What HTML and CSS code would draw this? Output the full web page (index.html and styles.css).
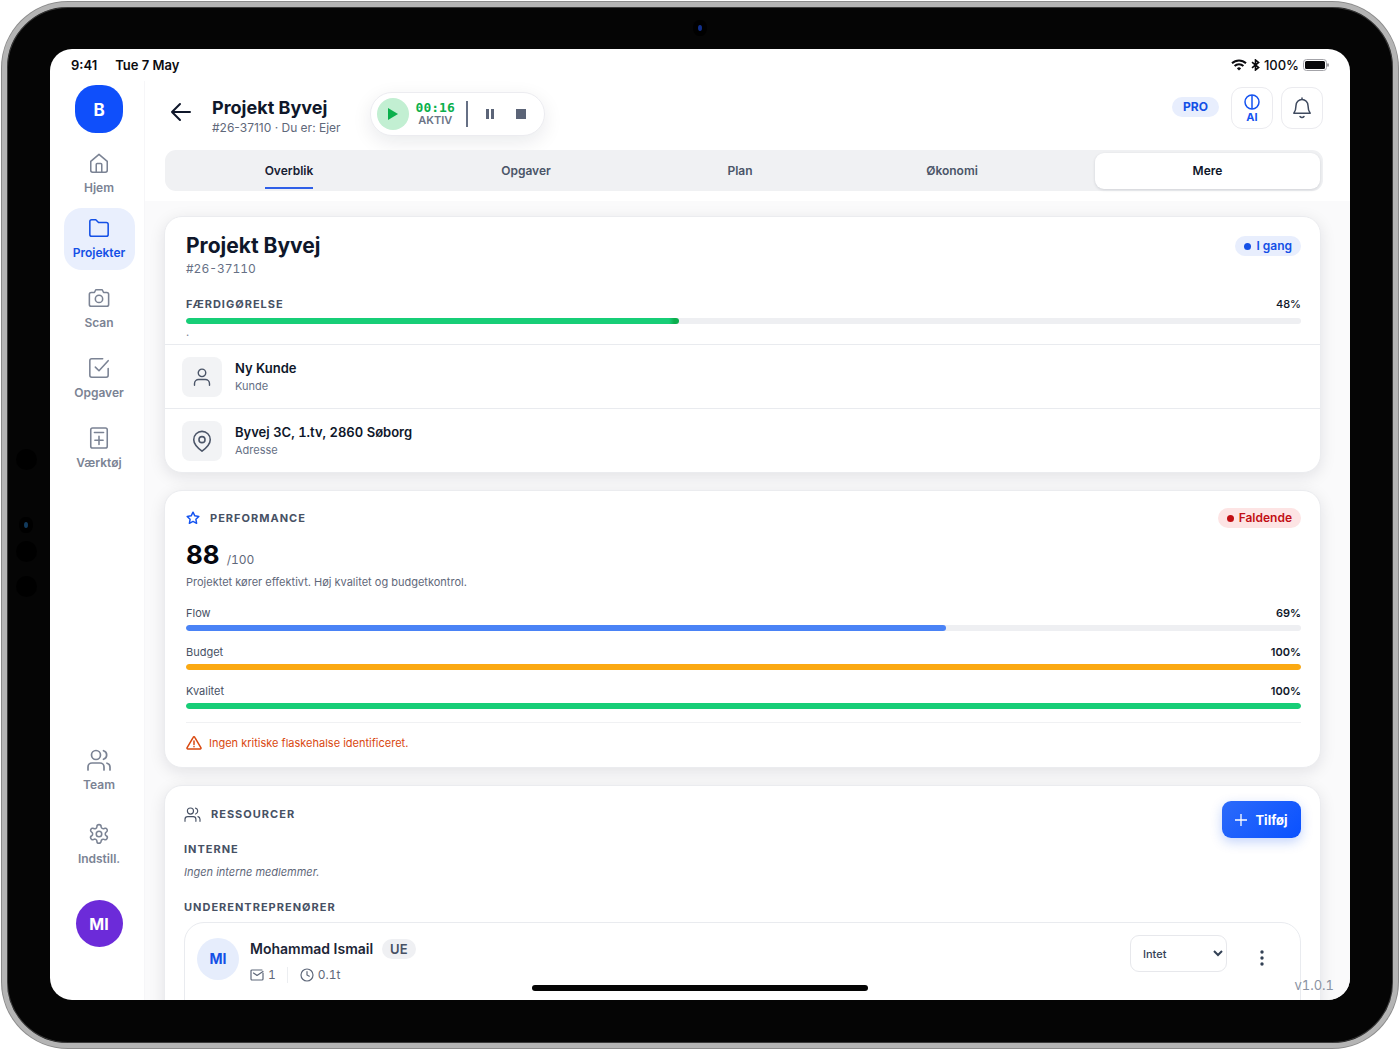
FILE: index.html
```html
<!DOCTYPE html>
<html lang="da">
<head>
  <meta charset="UTF-8">
  <meta name="viewport" content="width=device-width, initial-scale=1.0">
  <title>Projekt Byvej</title>
  <link rel="stylesheet" href="styles.css">
</head>
<body>

<div class="tablet">
  <span class="camera camera-top"></span>
  <span class="camera camera-side"></span>
  <div class="sensors"><i></i><i></i><i></i></div>

  <div class="screen">
    <div class="statusbar">
      <span>9:41</span>
      <span>Tue 7 May</span>
      <div class="status-right">
        <svg width="16" height="12" viewBox="0 0 16 12" fill="none" stroke="#0b0b0f" stroke-width="2">
          <path d="M1 4.3a10 10 0 0 1 14 0M3.6 7a6.2 6.2 0 0 1 8.8 0"/>
          <path d="M8 11.6 5.9 9.4a3 3 0 0 1 4.2 0z" fill="#0b0b0f" stroke="none"/>
        </svg>
        <svg width="9" height="12" viewBox="0 0 9 12" fill="none" stroke="#0b0b0f" stroke-width="1.6">
          <path d="M1 3.2 7.6 8.6 4.5 11V1l3.1 2.4L1 8.8"/>
        </svg>
        <span>100%</span>
        <svg width="26" height="12" viewBox="0 0 26 12">
          <rect x=".5" y=".5" width="23" height="11" rx="3" fill="#fff" stroke="#a3a3a8"/>
          <rect x="2" y="2" width="20" height="8" rx="1.5" fill="#08080a"/>
          <path d="M25 4.5v3" stroke="#77777c" stroke-width="1.4"/>
        </svg>
      </div>
    </div>

    <div class="shell">
      <aside class="sidebar">
        <div class="logo">B</div>
        <nav class="nav">
          <a href="#" class="nav-item home">
            <svg class="icon" width="22" height="22" viewBox="0 0 24 24"><path d="M3 10.2 12 2.5l9 7.700V20a2 2 0 0 1-2 2H5a2 2 0 0 1-2-2z"/><path d="M9 22v-8.500a1 1 0 0 1 1-1h4a1 1 0 0 1 1 1V22"/></svg>
            Hjem
          </a>
          <a href="#" class="nav-item active">
            <svg class="icon" width="22" height="22" viewBox="0 0 24 24"><path d="M2 5a2 2 0 0 1 2-2h4.500l3 3H20a2 2 0 0 1 2 2v11a2 2 0 0 1-2 2H4a2 2 0 0 1-2-2z"/></svg>
            Projekter
          </a>
          <a href="#" class="nav-item">
            <svg class="icon" width="22" height="22" viewBox="0 0 24 24"><path d="M8.500 3h7L17 6h3.500a2 2 0 0 1 2 2v11a2 2 0 0 1-2 2h-17a2 2 0 0 1-2-2V8a2 2 0 0 1 2-2H7z"/><circle cx="12" cy="13" r="4"/></svg>
            Scan
          </a>
          <a href="#" class="nav-item">
            <svg class="icon" width="22" height="22" viewBox="0 0 24 24"><path d="m8 11 4 4L22 4"/><path d="M22 12.500V20a2 2 0 0 1-2 2H4a2 2 0 0 1-2-2V4a2 2 0 0 1 2-2h12"/></svg>
            Opgaver
          </a>
          <a href="#" class="nav-item">
            <svg class="icon" width="22" height="22" viewBox="0 0 24 24"><rect x="3" y="1" width="18" height="22" rx="2"/><path d="M7 6h10M12 10v9M7.500 14.500h9"/></svg>
            Værktøj
          </a>
        </nav>
        <nav class="nav nav-bottom">
          <a href="#" class="nav-item">
            <svg class="icon" width="24" height="22" viewBox="0 0 24 22"><circle cx="9" cy="6" r="4.500"/><path d="M1 21v-3a4 4 0 0 1 4-4h8a4 4 0 0 1 4 4v3M16.500 1.700a4.500 4.500 0 0 1 0 8.600M23 21v-3a4 4 0 0 0-3-3.800"/></svg>
            Team
          </a>
          <a href="#" class="nav-item">
            <svg class="icon" width="22" height="22" viewBox="0 0 24 24"><path d="M9.700 4.100a2.300 2.300 0 0 1 4.600 0 2.300 2.300 0 0 0 3.300 1.900 2.300 2.300 0 0 1 2.300 4 2.300 2.300 0 0 0 0 3.900 2.300 2.300 0 0 1-2.300 4 2.300 2.300 0 0 0-3.300 1.900 2.300 2.300 0 0 1-4.600 0 2.300 2.300 0 0 0-3.400-1.900 2.300 2.300 0 0 1-2.300-4 2.300 2.300 0 0 0 0-3.900 2.300 2.300 0 0 1 2.300-4 2.300 2.300 0 0 0 3.400-1.900"/><circle cx="12" cy="12" r="3"/></svg>
            Indstill.
          </a>
        </nav>
        <button class="profile">MI</button>
      </aside>

      <main class="main">
        <header class="header">
          <button class="back" aria-label="Tilbage">
            <svg width="22" height="20" viewBox="0 0 22 20" fill="none" stroke="#0f172a" stroke-width="2" stroke-linecap="round" stroke-linejoin="round"><path d="M20 10H2M10 2 2 10l8 8"/></svg>
          </button>
          <div class="heading">
            <h1>Projekt Byvej</h1>
            <p>#26-37110 · Du er: Ejer</p>
          </div>
          <div class="timer">
            <span class="timer-play"><svg width="12" height="12" viewBox="0 0 12 12"><path d="M1 0v12l10-6z" fill="#0bb04c"/></svg></span>
            <div class="timer-text">
              <strong>00:16</strong>
              <span>AKTIV</span>
            </div>
            <button class="timer-btn" aria-label="Pause"><svg width="10" height="12" viewBox="0 0 10 12"><path d="M1 1h3v10H1zM6 1h3v10H6z" fill="#5b6477"/></svg></button>
            <button class="timer-btn" aria-label="Stop"><svg width="12" height="12" viewBox="0 0 12 12"><path d="M1 1h10v10H1z" fill="#5b6477"/></svg></button>
          </div>
          <div class="header-right">
            <span class="pro">PRO</span>
            <button class="tile tile-ai">
              <svg width="16" height="16" viewBox="0 0 16 16" fill="none" stroke="#1453f0" stroke-width="1.500"><circle cx="8" cy="8" r="7"/><path d="M8 1v14"/></svg>
              AI
            </button>
            <button class="tile" aria-label="Notifikationer">
              <svg width="20" height="22" viewBox="0 0 20 22" fill="none" stroke="#3f4a5f" stroke-width="1.500" stroke-linecap="round" stroke-linejoin="round"><path d="M10 1v1.500M10 2.500A6 6 0 0 0 4 8.500c0 4-.8 5.800-2.200 7.700h16.400C16.800 14.300 16 12.500 16 8.500a6 6 0 0 0-6-6z"/><path d="M8 19.500a2.600 2.600 0 0 0 4 0"/></svg>
            </button>
          </div>
        </header>

        <div class="tabs">
          <button class="tab current"><span>Overblik</span></button>
          <button class="tab">Opgaver</button>
          <button class="tab">Plan</button>
          <button class="tab">Økonomi</button>
          <button class="tab tab-more">Mere</button>
        </div>

        <div class="content">
          <section class="card">
            <div class="project">
              <div class="row">
                <h2>Projekt Byvej</h2>
                <span class="badge badge-blue">I gang</span>
              </div>
              <p class="project-id">#26-37110</p>
              <div class="row completion">
                <span class="caps">FÆRDIGØRELSE</span>
                <span class="percent">48%</span>
              </div>
              <div class="bar"><div class="fill green-cap" style="width: 44.2%"></div></div>
              <p class="dot-note">.</p>
            </div>
            <div class="info">
              <span class="info-icon"><svg class="icon" width="20" height="20" viewBox="0 0 24 24"><circle cx="12" cy="7" r="4.500"/><path d="M3 22v-2a5 5 0 0 1 5-5h8a5 5 0 0 1 5 5v2"/></svg></span>
              <div>
                <strong>Ny Kunde</strong>
                <span>Kunde</span>
              </div>
            </div>
            <div class="info">
              <span class="info-icon"><svg class="icon" width="20" height="22" viewBox="0 0 20 24"><path d="M19 10.500c0 5-5 9.500-9 12.500-4-3-9-7.500-9-12.500a9 9 0 0 1 18 0z"/><circle cx="10" cy="10.500" r="3.300"/></svg></span>
              <div>
                <strong>Byvej 3C, 1.tv, 2860 Søborg</strong>
                <span>Adresse</span>
              </div>
            </div>
          </section>

          <section class="card performance">
            <div class="row">
              <h3 class="caps"><svg width="14" height="14" viewBox="0 0 24 24" fill="none" stroke="#1453f0" stroke-width="2.500" stroke-linejoin="round"><path d="m12 2 3.100 6.300 6.900 1-5 4.900 1.200 6.900L12 17.800l-6.200 3.300L7 14.200 2 9.300l6.900-1z"/></svg>PERFORMANCE</h3>
              <span class="badge badge-red">Faldende</span>
            </div>
            <div class="score"><strong>88</strong><span>/100</span></div>
            <p class="summary">Projektet kører effektivt. Høj kvalitet og budgetkontrol.</p>
            <div class="metric">
              <div class="row"><span>Flow</span><strong>69%</strong></div>
              <div class="bar"><div class="fill blue" style="width: 68.2%"></div></div>
            </div>
            <div class="metric">
              <div class="row"><span>Budget</span><strong>100%</strong></div>
              <div class="bar"><div class="fill amber" style="width: 100%"></div></div>
            </div>
            <div class="metric">
              <div class="row"><span>Kvalitet</span><strong>100%</strong></div>
              <div class="bar"><div class="fill green" style="width: 100%"></div></div>
            </div>
            <p class="warning">
              <svg width="16" height="14" viewBox="0 0 16 14" fill="none" stroke="#d9480f" stroke-width="1.500" stroke-linecap="round" stroke-linejoin="round"><path d="M7.200 1.300 1 11.800A.9.9 0 0 0 1.800 13h12.400a.9.9 0 0 0 .8-1.200L8.800 1.300a.9.9 0 0 0-1.600 0zM8 5v3.500M8 10.600v.1"/></svg>
              Ingen kritiske flaskehalse identificeret.
            </p>
          </section>

          <section class="card resources">
            <div class="row resources-head">
              <h3 class="caps"><svg class="icon" width="17" height="15" viewBox="0 0 24 22"><circle cx="9" cy="6" r="4.500"/><path d="M1 21v-3a4 4 0 0 1 4-4h8a4 4 0 0 1 4 4v3M16.500 1.700a4.500 4.500 0 0 1 0 8.600M23 21v-3a4 4 0 0 0-3-3.800"/></svg>RESSOURCER</h3>
              <button class="add"><svg width="12" height="12" viewBox="0 0 12 12" stroke="#fff" stroke-width="1.300"><path d="M6 0v12M0 6h12"/></svg>Tilføj</button>
            </div>
            <h4 class="caps">INTERNE</h4>
            <p class="empty">Ingen interne medlemmer.</p>
            <h4 class="caps">UNDERENTREPRENØRER</h4>
            <div class="member">
              <span class="member-avatar">MI</span>
              <div class="member-info">
                <div class="member-name">Mohammad Ismail <span>UE</span></div>
                <div class="member-meta">
                  <span><svg class="icon thin" width="14" height="12" viewBox="0 0 14 12"><path d="M13 4v6a1 1 0 0 1-1 1H2a1 1 0 0 1-1-1V2a1 1 0 0 1 1-1h10"/><path d="M3.500 4 7 6.500 13 2.500"/></svg>1</span>
                  <span><svg class="icon thin" width="14" height="14" viewBox="0 0 14 14"><circle cx="7" cy="7" r="6"/><path d="M7 3.500V7l2.300 1.200"/></svg>0.1t</span>
                </div>
              </div>
              <select class="role" aria-label="Rolle"><option>Intet</option></select>
              <button class="more" aria-label="Flere"><svg width="4" height="18" viewBox="0 0 4 18" fill="#334155"><circle cx="2" cy="3" r="1.700"/><circle cx="2" cy="9" r="1.700"/><circle cx="2" cy="15" r="1.700"/></svg></button>
            </div>
          </section>
        </div>
      </main>
    </div>

    <span class="home-indicator"></span>
    <span class="version">v1.0.1</span>
  </div>
</div>

</body>
</html>
```
FILE: styles.css
```css
* {
  box-sizing: border-box;
}
body {
  margin: 0;
  padding: 2px;
  height: 100vh;
  background: #fff;
  color: #0f172a;
  font-family: Inter, "Liberation Sans", sans-serif;
  font-size: 12px;
  line-height: 16px;
}
h1, h2, h3, h4, p {
  margin: 0;
}
button, select {
  font: inherit;
  color: inherit;
  border: none;
  background: none;
  padding: 0;
  cursor: pointer;
}
.icon {
  fill: none;
  stroke: currentColor;
  stroke-width: 1.7;
  stroke-linecap: round;
  stroke-linejoin: round;
}
.icon.thin {
  stroke-width: 1.2;
}
.row {
  display: flex;
  justify-content: space-between;
  align-items: center;
}

/* device */
.tablet {
  position: relative;
  height: 100%;
  padding: 42px 43px 43px;
  border: 5px solid #b4b4b4;
  border-radius: 66px;
  background: #050505;
  box-shadow: inset 0 0 0 1px #3a3a3a, 0 0 0 1px #8c8c8c;
}
.camera {
  position: absolute;
  width: 4px;
  height: 6px;
  border-radius: 50%;
  background: #12308c;
  box-shadow: 0 0 0 5px #000;
}
.camera-top {
  top: 18px;
  left: 50%;
  margin-left: -2px;
}
.camera-side {
  top: 50%;
  left: 17px;
  margin-top: -3px;
  background: #123a5c;
}
.sensors {
  position: absolute;
  top: 442px;
  left: 9px;
  display: grid;
  gap: 14px;
}
.sensors i {
  width: 21px;
  height: 21px;
  border-radius: 50%;
  background: #000;
}
.sensors i:first-child {
  margin-bottom: 57px;
}
.screen {
  position: relative;
  display: flex;
  flex-direction: column;
  height: 100%;
  border-radius: 22px;
  background: #fff;
  overflow: hidden;
}
.statusbar {
  display: flex;
  align-items: center;
  flex: none;
  gap: 18px;
  height: 32px;
  padding: 0 21px;
  color: #0b0b0f;
  font-size: 13px;
  font-weight: 600;
}
.status-right {
  display: flex;
  align-items: center;
  gap: 4px;
  margin-left: auto;
  font-weight: 500;
}
.home-indicator {
  position: absolute;
  bottom: 9px;
  left: 50%;
  width: 336px;
  height: 6px;
  margin-left: -168px;
  border-radius: 3px;
  background: #050505;
}
.version {
  position: absolute;
  right: 16px;
  bottom: 7px;
  color: #8b93a3;
  font-size: 13px;
  font-variant-numeric: tabular-nums;
}

/* sidebar */
.shell {
  display: flex;
  flex: 1;
  min-height: 0;
}
.sidebar {
  display: flex;
  flex-direction: column;
  align-items: center;
  flex: none;
  width: 95px;
  padding: 4px 0 53px 4px;
  border-right: 1px solid #f6f6f8;
}
.logo {
  width: 48px;
  height: 48px;
  border-radius: 21px;
  background: #0f4ffb;
  color: #fff;
  font-size: 17px;
  font-weight: 700;
  line-height: 50px;
  text-align: center;
}
.nav {
  display: flex;
  flex-direction: column;
  gap: 8px;
  margin-top: 10px;
}
.nav-bottom {
  gap: 12px;
  margin-top: auto;
}
.nav-item {
  display: flex;
  flex-direction: column;
  align-items: center;
  gap: 6px;
  width: 71px;
  height: 62px;
  padding-top: 9px;
  border-radius: 18px;
  color: #7b8394;
  font-size: 12px;
  font-weight: 600;
  text-decoration: none;
}
.nav-item.home {
  height: 57px;
}
.nav-item.active {
  background: #e9effd;
  color: #1450e6;
}
.profile {
  width: 47px;
  height: 47px;
  margin-top: 24px;
  border-radius: 50%;
  background: #6c2bd9;
  color: #fff;
  font-size: 16px;
  font-weight: 700;
}

/* header */
.main {
  display: flex;
  flex-direction: column;
  flex: 1;
  min-width: 0;
}
.header {
  display: flex;
  flex: none;
  height: 69px;
  padding: 6px 27px 0 25px;
}
.back {
  display: flex;
  align-self: flex-start;
  margin-top: 15px;
}
.heading {
  margin: 9px 29px 0 20px;
}
.heading h1 {
  font-size: 18px;
  line-height: 24px;
}
.heading p {
  color: #5f687a;
}
.timer {
  display: flex;
  align-items: center;
  align-self: flex-start;
  height: 44px;
  margin-top: 5px;
  padding: 0 17px 0 6px;
  border: 1px solid #ececf0;
  border-radius: 22px;
  background: #fff;
  box-shadow: 0 6px 20px rgba(15, 23, 42, 0.09);
}
.timer-play {
  display: flex;
  align-items: center;
  justify-content: center;
  width: 32px;
  height: 32px;
  border-radius: 50%;
  background: #c2efd2;
}
.timer-text {
  display: flex;
  flex-direction: column;
  align-items: center;
  margin-left: 7px;
  padding-right: 11px;
  border-right: 2px solid #667085;
  color: #6b7486;
  font-size: 11px;
  font-weight: 600;
  line-height: 13px;
}
.timer-text strong {
  color: #0bb04c;
  font-family: "DejaVu Sans Mono", monospace;
  font-size: 13px;
}
.timer-btn {
  display: flex;
  margin-left: 17px;
}
.timer-btn + .timer-btn {
  margin-left: 20px;
}
.header-right {
  display: flex;
  align-items: flex-start;
  margin-left: auto;
}
.pro {
  margin: 10px 12px 0 0;
  padding: 2px 11px;
  border-radius: 10px;
  background: #e8eefd;
  color: #1450e6;
  font-weight: 700;
}
.tile {
  display: flex;
  flex-direction: column;
  align-items: center;
  justify-content: center;
  width: 42px;
  height: 42px;
  border: 1px solid #ebebef;
  border-radius: 11px;
  background: #fff;
}
.tile + .tile {
  margin-left: 8px;
}
.tile-ai {
  padding-top: 2px;
  color: #1453f0;
  font-size: 11px;
  font-weight: 700;
  line-height: 14px;
}

.tabs {
  display: grid;
  grid-template-columns: 248fr 226fr 202fr 222fr 257fr;
  flex: none;
  height: 41px;
  margin: 0 27px 10px 20px;
  padding: 3px 3px 4px 0;
  border-radius: 11px;
  background: #f0f1f3;
}
.tab {
  color: #4b5568;
  font-size: 12px;
  font-weight: 600;
}
.tab.current {
  color: #172033;
}
.tab.current span {
  display: inline-block;
  padding: 10px 0 8px;
  border-bottom: 2px solid #2f5fe8;
}
.tab-more {
  margin-left: 32px;
  border-radius: 9px;
  background: #fff;
  color: #0f172a;
  box-shadow: 0 1px 3px rgba(15, 23, 42, 0.14);
}

/* content */
.content {
  display: flex;
  flex-direction: column;
  flex: 1;
  gap: 17px;
  min-height: 0;
  padding: 15px 29px 0 19px;
  background: #fafafb;
  overflow: hidden;
}
.card {
  flex: none;
  border: 1px solid #ebecef;
  border-radius: 18px;
  background: #fff;
  box-shadow: 0 4px 16px rgba(15, 23, 42, 0.1);
}
.caps {
  color: #475164;
  font-size: 11px;
  font-weight: 700;
  letter-spacing: 1px;
}
h3.caps {
  display: flex;
  align-items: center;
  gap: 10px;
}
.badge {
  display: flex;
  align-items: center;
  gap: 5px;
  height: 20px;
  padding: 0 9px;
  border-radius: 10px;
  font-weight: 600;
}
.badge::before {
  content: "";
  width: 7px;
  height: 7px;
  border-radius: 50%;
  background: currentColor;
}
.badge-blue {
  background: #e8eefd;
  color: #1450e6;
}
.badge-red {
  background: #fde4e4;
  color: #c20f14;
}
.bar {
  height: 6px;
  border-radius: 3px;
  background: #eeeff2;
  overflow: hidden;
}
.fill {
  height: 100%;
  border-radius: 3px;
}
.green {
  background: #17ce77;
}
.green-cap {
  background: linear-gradient(90deg, #17ce77 98%, #0cae4e 99%);
}
.blue {
  background: #4a83f6;
}
.amber {
  background: #fba912;
}

.project {
  padding: 14px 19px 0 21px;
}
.project h2 {
  font-size: 21px;
  line-height: 30px;
}
.project-id {
  color: #667085;
  font-variant-numeric: tabular-nums;
}
.completion {
  margin: 19px 0 6px;
}
.percent {
  font-size: 11px;
  font-weight: 500;
}
.dot-note {
  height: 20px;
  color: #7b8394;
  font-size: 11px;
}
.info {
  display: flex;
  align-items: center;
  gap: 13px;
  height: 64px;
  padding: 0 17px;
  border-top: 1px solid #e9ebef;
}
.info-icon {
  display: flex;
  align-items: center;
  justify-content: center;
  width: 40px;
  height: 40px;
  border-radius: 8px;
  background: #f2f3f5;
  color: #4b5568;
}
.info strong, .info div span {
  display: block;
  line-height: 18px;
}
.info strong {
  font-size: 13px;
  font-weight: 600;
  font-variant-numeric: tabular-nums;
}
.info div span {
  color: #667085;
  font-size: 11px;
}

.performance {
  padding: 17px 19px 16px 21px;
}
.score {
  display: flex;
  align-items: baseline;
  gap: 7px;
  margin-top: 13px;
  color: #5f687a;
  font-size: 12px;
  line-height: 28px;
  font-variant-numeric: tabular-nums;
}
.score strong {
  color: #05070f;
  font-size: 26px;
}
.summary {
  margin-bottom: 15px;
  color: #5f687a;
  font-size: 11px;
}
.metric {
  height: 39px;
  color: #475164;
  font-size: 11px;
}
.metric .row {
  margin-bottom: 4px;
}
.metric strong {
  color: #0f172a;
  font-weight: 600;
}
.warning {
  display: flex;
  align-items: center;
  gap: 7px;
  padding-top: 12px;
  border-top: 1px solid #f0f1f3;
  color: #d9480f;
  font-size: 11px;
}

.resources {
  height: 300px;
  padding: 15px 19px 0;
}
.resources-head {
  align-items: flex-start;
  margin-bottom: 2px;
  height: 38px;
}
.resources-head .caps {
  line-height: 27px;
}
.add {
  display: flex;
  align-items: center;
  justify-content: center;
  gap: 8px;
  width: 79px;
  height: 37px;
  border-radius: 9px;
  background: linear-gradient(135deg, #2c6bfa, #0a51ff);
  color: #fff;
  font-size: 13px;
  font-weight: 700;
  box-shadow: 0 4px 12px rgba(20, 83, 240, 0.25);
}
.empty {
  margin: 7px 0 19px;
  color: #5f687a;
  font-size: 11px;
  font-style: italic;
}
.member {
  display: flex;
  height: 140px;
  margin-top: 7px;
  padding: 12px 36px 0 12px;
  border: 1px solid #e9ebef;
  border-radius: 20px;
}
.member-avatar {
  width: 42px;
  height: 42px;
  margin-top: 3px;
  border-radius: 50%;
  background: #e6edfc;
  color: #1450e6;
  font-size: 14px;
  font-weight: 700;
  line-height: 42px;
  text-align: center;
}
.member-info {
  flex: 1;
  margin-left: 11px;
}
.member-name {
  display: flex;
  align-items: center;
  gap: 9px;
  margin-top: 4px;
  color: #1c2536;
  font-size: 14px;
  font-weight: 600;
  line-height: 20px;
}
.member-name span {
  padding: 0 8px;
  border-radius: 10px;
  background: #eff0f3;
  color: #475164;
  font-size: 13px;
}
.member-name, .member-meta {
  height: 20px;
}
.member-meta {
  display: flex;
  align-items: center;
  margin-top: 6px;
  color: #5f687a;
  font-variant-numeric: tabular-nums;
}
.member-meta span {
  display: flex;
  align-items: center;
  gap: 4px;
}
.member-meta span + span {
  margin-left: 11px;
  padding-left: 12px;
  border-left: 1px solid #eceef1;
}
.role {
  width: 97px;
  height: 37px;
  padding: 0 8px;
  border: 1px solid #e7e8ec;
  border-radius: 9px;
  color: #334155;
  font-size: 11px;
  font-weight: 500;
}
.more {
  display: flex;
  align-self: flex-start;
  margin: 14px 0 0 33px;
}
```
